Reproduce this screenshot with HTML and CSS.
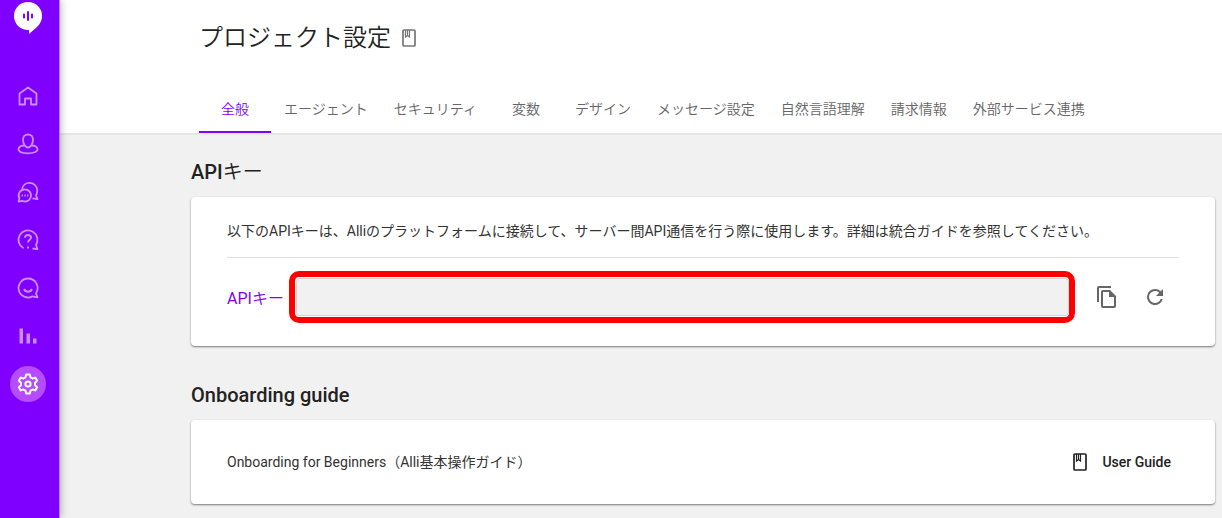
FILE: index.html
```html
<!DOCTYPE html>
<html lang="ja">
<head>
    <meta charset="utf-8">
    <meta name="viewport" content="width=device-width, initial-scale=1.0">
    <title>プロジェクト設定</title>
    <link rel="stylesheet" href="styles.css">
</head>
<body>

<nav class="sidebar">
    <a class="logo" href="#" aria-label="Alli">
        <svg width="30" height="36" viewBox="0 0 30 36">
            <circle fill="#fff" cx="15" cy="16" r="14"/>
            <path fill="#fff" d="M16 28v6l8-7z"/>
            <path stroke="#7f00ff" stroke-width="2" stroke-linecap="round" d="M11 14.500v3M15 12v8M19 14.500v3"/>
        </svg>
    </a>
    <a class="nav-item" href="#" aria-label="ホーム">
        <svg viewBox="0 0 24 24"><path d="M3.500 9.500L12 3.500l8.500 6V20.500H15V14.500H9v6H3.500z"/></svg>
    </a>
    <a class="nav-item" href="#" aria-label="顧客">
        <svg viewBox="0 0 24 24"><path d="M12 2.500c-3 0-5 2.200-5 5.300 0 3.800 2.200 7.700 5 7.700s5-3.900 5-7.700c0-3.100-2-5.300-5-5.300zM8.200 13.500C5 13.500 2.500 15 2.500 17.300c0 2.500 4.200 4 9.500 4s9.500-1.500 9.500-4c0-2.300-2.500-3.800-5.700-3.800"/></svg>
    </a>
    <a class="nav-item" href="#" aria-label="会話">
        <svg viewBox="0 0 24 24">
            <path d="M6 9.500C6.500 5.500 9.700 2.800 13.500 2.800c4.400 0 7.800 3.400 7.800 7.700 0 2-.7 3.700-1.300 5l1.500 3.700-5-.9M9 9.500a6 6 0 0 1 6 6c0 3.400-2.700 6-6 6-1 0-1.900-.2-2.700-.6l-3.800.7.9-3.200A6 6 0 0 1 9 9.500z"/>
            <path d="M5.600 15.500h1.400M8.300 15.500h1.400M11 15.500h1.400"/>
        </svg>
    </a>
    <a class="nav-item" href="#" aria-label="Q&amp;A">
        <svg viewBox="0 0 24 24">
            <path d="M7.500 20.300A9.500 9.500 0 1 1 20 17l1.500 4.200-5-.7"/>
            <path stroke-width="2" d="M9 9.700c.1-1.700 1.300-2.700 3-2.700s3 1 3 2.600c0 2.200-3 2.300-3 5M12 18.500v2"/>
        </svg>
    </a>
    <a class="nav-item" href="#" aria-label="アンケート">
        <svg viewBox="0 0 24 24">
            <path d="M12 2.500a9.500 9.500 0 1 0 4.500 17.900l5 1-1.600-4A9.500 9.500 0 0 0 12 2.500z"/>
            <path stroke-width="2" d="M8 13c.8 1.800 2.200 2.700 4 2.700s3.200-.9 4-2.700"/>
        </svg>
    </a>
    <a class="nav-item" href="#" aria-label="分析">
        <svg viewBox="0 0 24 24"><path class="bars" d="M3.500 4.500h3.500v15H3.500zM10.500 9.500H14v10h-3.500zM17 14.500h3.500v5H17z"/></svg>
    </a>
    <a class="nav-item active" href="#" aria-label="設定">
        <svg viewBox="0 0 24 24">
            <path d="M10.200 2.500h3.600l.7 2.800 2 1.200 2.800-.9 1.800 3.200-2.100 2v2.400l2.100 2-1.800 3.200-2.800-.9-2 1.200-.7 2.800h-3.600l-.7-2.800-2-1.200-2.800.9-1.800-3.200 2.100-2v-2.400l-2.100-2 1.800-3.200 2.800.9 2-1.200z"/>
            <circle cx="12" cy="12" r="2.600"/>
        </svg>
    </a>
</nav>

<div class="page">
    <header class="header">
        <h1 class="title">
            プロジェクト設定
            <a class="title-link" href="#" aria-label="ガイド">
                <svg class="book" width="20" height="20" viewBox="0 0 20 20">
                    <rect x="4" y="2" width="12" height="16" rx="1"/>
                    <path d="M6.500 2v7l2-1.500 2 1.500V2M8.500 2v5"/>
                </svg>
            </a>
        </h1>
        <nav class="tabs">
            <a class="tab selected" href="#">全般</a>
            <a class="tab" href="#">エージェント</a>
            <a class="tab" href="#">セキュリティ</a>
            <a class="tab" href="#">変数</a>
            <a class="tab" href="#">デザイン</a>
            <a class="tab" href="#">メッセージ設定</a>
            <a class="tab" href="#">自然言語理解</a>
            <a class="tab" href="#">請求情報</a>
            <a class="tab" href="#">外部サービス連携</a>
        </nav>
    </header>

    <main class="content">
        <h2 class="section-title">API<span class="kana">キー</span></h2>
        <section class="card">
            <p class="description">以下のAPIキーは、Alliのプラットフォームに接続して、サーバー間API通信を行う際に使用します。詳細は統合ガイドを参照してください。</p>
            <div class="key-row">
                <label class="key-label" for="apiKey">API<span class="kana">キー</span></label>
                <div class="key-frame">
                    <input class="key-input" id="apiKey" type="text" readonly>
                </div>
                <button class="icon-button" type="button" aria-label="コピー">
                    <svg width="24" height="24" viewBox="0 0 24 24"><path fill="currentColor" d="M16 1H4a2 2 0 0 0-2 2v14h2V3h12zM15 5H8a2 2 0 0 0-2 2v14c0 1.100.9 2 2 2h11a2 2 0 0 0 2-2V11zM8 21V7h6v5h5v9z"/></svg>
                </button>
                <button class="icon-button" type="button" aria-label="再生成">
                    <svg width="24" height="24" viewBox="0 0 24 24"><path fill="currentColor" d="M17.650 6.350A7.960 7.960 0 0 0 12 4a8 8 0 1 0 7.730 10h-2.080A6 6 0 1 1 12 6c1.660 0 3.140.690 4.220 1.780L13 11h7V4z"/></svg>
                </button>
            </div>
        </section>

        <h2 class="section-title">Onboarding guide</h2>
        <section class="card guide">
            <p class="guide-text">Onboarding for Beginners（Alli基本操作ガイド）</p>
            <a class="guide-link" href="#">
                <svg class="book" width="20" height="20" viewBox="0 0 20 20">
                    <rect x="4" y="2" width="12" height="16" rx="1"/>
                    <path d="M6.500 2v7l2-1.500 2 1.500V2M8.500 2v5"/>
                </svg>
                User Guide
            </a>
        </section>
    </main>
</div>

</body>
</html>
```

FILE: styles.css
```css
* {
    box-sizing: border-box;
}

body {
    display: flex;
    min-height: 100vh;
    margin: 0;
    font-family: Roboto, "Noto Sans CJK JP", sans-serif;
    font-size: 14px;
    color: #222;
    background-color: #f1f1f1;
}

a {
    color: inherit;
    text-decoration: none;
}

h1, h2, p {
    margin: 0;
}

svg {
    display: block;
}

.sidebar {
    display: flex;
    flex-direction: column;
    align-items: center;
    gap: 12px;
    flex: none;
    z-index: 1;
    width: 60px;
    padding-right: 4px;
    background-color: #7f00ff;
    border-right: 1px solid #b78af0;
    box-shadow: 0 0 8px rgba(0, 0, 0, .35);
}

.logo {
    height: 66px;
}

.nav-item {
    display: flex;
    align-items: center;
    justify-content: center;
    width: 36px;
    height: 36px;
    border-radius: 50%;
    color: #c98fff;
}

.nav-item svg {
    width: 24px;
    height: 24px;
    fill: none;
    stroke: currentColor;
    stroke-width: 1.8;
    stroke-linejoin: round;
}

.nav-item .bars {
    fill: currentColor;
    stroke: none;
}

.nav-item.active {
    color: #fff;
    background-color: #b54dff;
}

.nav-item.active svg {
    stroke-width: 2;
}

.book {
    fill: none;
    stroke: currentColor;
    stroke-width: 1.7;
}

.book path {
    stroke-width: 1.2;
}

.page {
    flex: 1;
    min-width: 0;
}

.header {
    padding: 18px 7px 0 139px;
    background-color: #fff;
    border-bottom: 2px solid #e6e6e6;
}

.title {
    display: flex;
    align-items: center;
    gap: 8px;
    height: 34px;
    font-size: 24px;
    font-weight: 350;
}

.title-link {
    padding-top: 6px;
    color: #757575;
}

.tabs {
    display: flex;
    margin-top: 33px;
}

.tab {
    min-width: 72px;
    padding: 2px 13px 0;
    line-height: 44px;
    text-align: center;
    white-space: nowrap;
    font-weight: 350;
    color: #666;
    border-bottom: 2px solid transparent;
}

.tab.selected {
    color: #7f00ff;
    border-bottom-color: #7f00ff;
}

.content {
    padding: 22px 7px 14px 131px;
}

.section-title {
    margin-bottom: 10px;
    font-size: 20px;
    font-weight: 500;
    line-height: 30px;
}

.kana {
    font-weight: 350;
}

.card {
    margin-bottom: 34px;
    padding: 20px 36px;
    background-color: #fff;
    border-radius: 4px;
    box-shadow: 0 1px 2px rgba(0, 0, 0, .5);
}

.card:last-child {
    margin-bottom: 0;
}

.description {
    padding-bottom: 12px;
    line-height: 28px;
    color: #333;
    border-bottom: 1px solid #e0e0e0;
}

.key-row {
    display: flex;
    align-items: center;
    padding: 13px 0 3px;
}

.key-label {
    width: 62px;
    font-size: 16px;
    white-space: nowrap;
    color: #7f00ff;
}

.key-frame {
    flex: 1;
    padding: 1px 0 1px 1px;
    border: 6px solid #f00;
    border-radius: 10px;
}

.key-input {
    display: block;
    width: 100%;
    height: 38px;
    padding: 0 12px;
    font: inherit;
    background-color: #f1f1f1;
    border: 1px solid #d5d5d5;
    border-radius: 4px;
}

.icon-button {
    display: flex;
    align-items: center;
    justify-content: center;
    width: 48px;
    height: 48px;
    padding: 0;
    color: #666;
    background: none;
    border: 0;
    cursor: pointer;
}

.key-frame + .icon-button {
    margin-left: 8px;
}

.guide {
    display: flex;
    align-items: center;
    justify-content: space-between;
    padding-right: 44px;
}

.guide-text {
    line-height: 44px;
    color: #333;
}

.guide-link {
    display: flex;
    align-items: center;
    gap: 12px;
    font-weight: 500;
}
```
